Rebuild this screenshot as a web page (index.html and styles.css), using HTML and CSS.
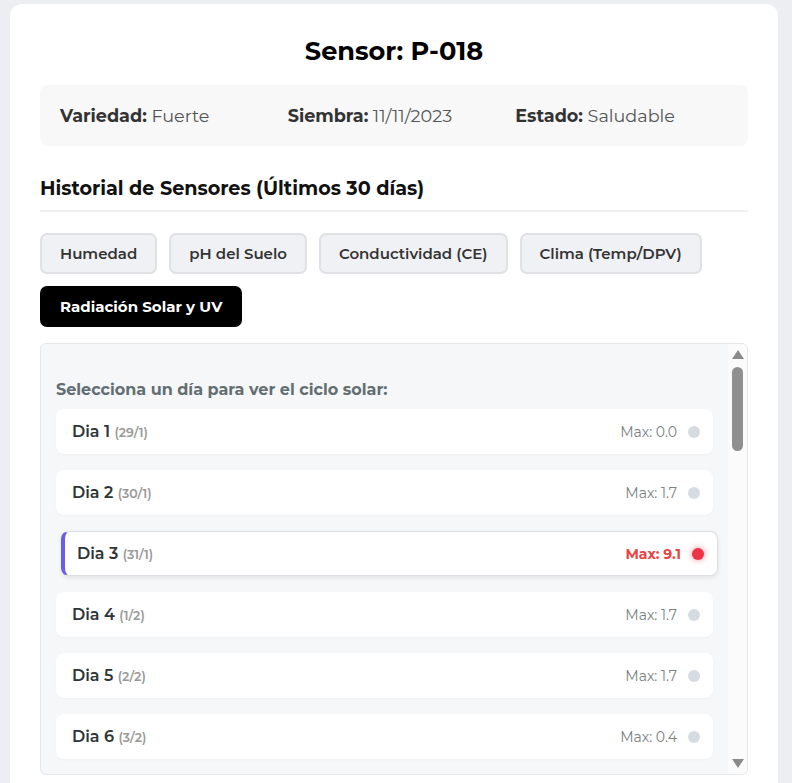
FILE: index.html
```html
<!DOCTYPE html>
<html lang="es">
<head>
    <meta charset="UTF-8">
    <meta name="viewport" content="width=device-width, initial-scale=1.0">
    <title>Sensor P-018</title>
    <link rel="stylesheet" href="styles.css">
</head>
<body>
    <div class="card">
        <h2 class="title">Sensor: P-018</h2>

        <div class="info">
            <div><strong>Variedad:</strong> Fuerte</div>
            <div><strong>Siembra:</strong> 11/11/2023</div>
            <div><strong>Estado:</strong> Saludable</div>
        </div>

        <h3 class="section-title">Historial de Sensores (Últimos 30 días)</h3>

        <div class="tabs">
            <button class="tab">Humedad</button>
            <button class="tab">pH del Suelo</button>
            <button class="tab">Conductividad (CE)</button>
            <button class="tab">Clima (Temp/DPV)</button>
            <button class="tab active">Radiación Solar y UV</button>
        </div>

        <div class="panel">
            <h4 class="panel-title">Selecciona un día para ver el ciclo solar:</h4>
            <div class="day-list">
                <div class="day"><span class="day-name">Dia 1 <small>(29/1)</small></span><span class="day-max">Max: 0.0</span><span class="dot"></span></div>
                <div class="day"><span class="day-name">Dia 2 <small>(30/1)</small></span><span class="day-max">Max: 1.7</span><span class="dot"></span></div>
                <div class="day selected"><span class="day-name">Dia 3 <small>(31/1)</small></span><span class="day-max">Max: 9.1</span><span class="dot"></span></div>
                <div class="day"><span class="day-name">Dia 4 <small>(1/2)</small></span><span class="day-max">Max: 1.7</span><span class="dot"></span></div>
                <div class="day"><span class="day-name">Dia 5 <small>(2/2)</small></span><span class="day-max">Max: 1.7</span><span class="dot"></span></div>
                <div class="day"><span class="day-name">Dia 6 <small>(3/2)</small></span><span class="day-max">Max: 0.4</span><span class="dot"></span></div>
            </div>

            <!-- scrollbar drawn by hand, the list goes on to day 30 -->
            <div class="scrollbar">
                <svg class="arrow" width="12" height="9" viewBox="0 0 12 9"><path d="M6 0 L12 9 L0 9 Z" fill="#8a8a8a"/></svg>
                <div class="thumb"></div>
                <div class="track-fill"></div>
                <svg class="arrow" width="12" height="9" viewBox="0 0 12 9"><path d="M0 0 L12 0 L6 9 Z" fill="#8a8a8a"/></svg>
            </div>
        </div>
    </div>
</body>
</html>
```

FILE: styles.css
```css
* {
    margin: 0;
    padding: 0;
    box-sizing: border-box;
    font-family: Montserrat, Inter, "Noto Sans", sans-serif;
}

body {
    background-color: #eceef2;
    padding: 4px 14px 0 10px;
    height: 100vh;
    overflow: hidden;
}

.card {
    background-color: white;
    border-radius: 12px;
    padding: 30px 30px 40px;
    width: 768px;
}

.title {
    text-align: center;
    font-size: 25.6px;
    line-height: 34px;
    font-weight: 700;
    color: #000;
}

.info {
    display: grid;
    grid-template-columns: repeat(3, 1fr);
    gap: 15px;
    background-color: #f8f8f8;
    border-radius: 8px;
    padding: 20px;
    margin-top: 17px;
    font-size: 17.6px;
    line-height: 21px;
    color: #555;
}

.info strong {
    color: #333;
    font-weight: 700;
}

.section-title {
    margin-top: 31px;
    padding-bottom: 10px;
    border-bottom: 2px solid #eef0f3;
    font-size: 19.2px;
    line-height: 23px;
    font-weight: 700;
    color: #111;
}

.tabs {
    display: flex;
    flex-wrap: wrap;
    gap: 12px;
    margin-top: 21px;
}

.tab {
    background-color: #f0f1f4;
    border: 2px solid #dfe1e5;
    border-radius: 7px;
    padding: 9px 18px;
    font-size: 15px;
    line-height: 19px;
    font-weight: 600;
    color: #333;
    cursor: pointer;
}

.tab.active {
    background-color: #000;
    border-color: #000;
    color: white;
    font-weight: 700;
}

.panel {
    position: relative;
    margin-top: 16px;
    height: 432px;
    overflow: hidden;
    background-color: #f6f7f9;
    border: 1px solid #e5e7eb;
    border-radius: 6px;
    padding: 15px 34px 15px 15px;
}

.panel-title {
    margin-top: 21px;
    font-size: 16px;
    line-height: 20px;
    font-weight: 700;
    color: #636e72;
}

.day-list {
    display: flex;
    flex-direction: column;
    gap: 16px;
    margin-top: 9px;
}

.day {
    display: flex;
    align-items: center;
    height: 45px;
    padding: 0 13px 0 16px;
    background-color: white;
    border-radius: 8px;
    box-shadow: 0 1px 2px rgba(0, 0, 0, 0.03);
}

.day-name {
    flex: 1;
    font-size: 16px;
    font-weight: 600;
    color: #2d3436;
}

.day-name small {
    font-size: 12.5px;
    font-weight: 600;
    color: #999;
}

.day-max {
    font-size: 14px;
    color: #7a7f83;
    margin-right: 11px;
}

.dot {
    width: 12px;
    height: 12px;
    border-radius: 50%;
    background-color: #d6dce1;
}

.day.selected {
    transform: translateX(5px);
    border: 1px solid #dcdfe3;
    border-left: 4px solid #6c5ce7;
    padding-left: 12px;
    box-shadow: 0 2px 5px rgba(0, 0, 0, 0.08);
}

.day.selected .day-max {
    color: #e84343;
    font-weight: 700;
}

.day.selected .dot {
    background-color: #ee3347;
    box-shadow: 0 0 6px rgba(238, 51, 71, 0.6);
}

.scrollbar {
    position: absolute;
    top: 0;
    right: 0;
    bottom: 0;
    width: 19px;
    background-color: #fbfbfc;
    display: flex;
    flex-direction: column;
    align-items: center;
    padding: 6px 0;
}

.arrow {
    flex-shrink: 0;
}

.thumb {
    margin-top: 8px;
    width: 11px;
    height: 84px;
    border-radius: 6px;
    background-color: #8f8f8f;
}

.track-fill {
    flex: 1;
}
```
